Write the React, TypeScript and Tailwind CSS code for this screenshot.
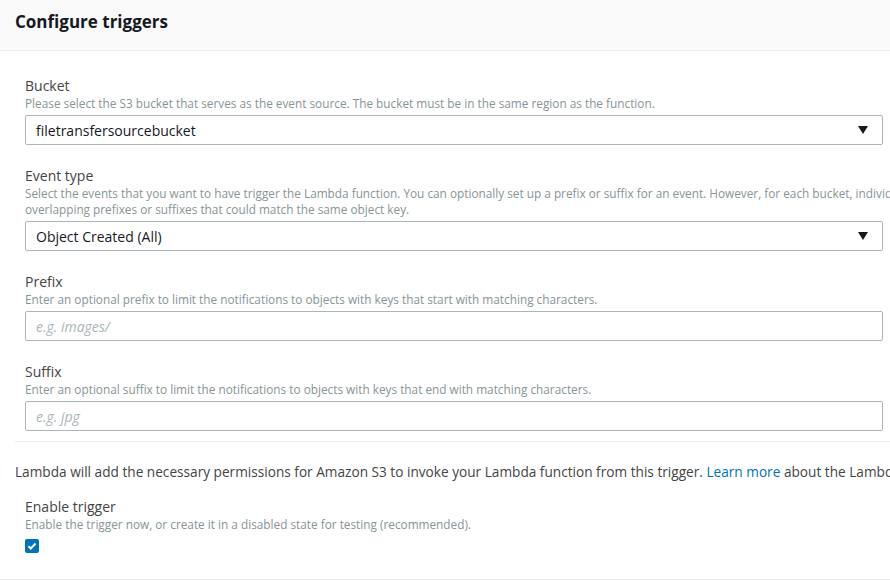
const font = { fontFamily: '"Open Sans", "Noto Sans", Arial, sans-serif' };

function Caret() {
  return (
    <svg width="10" height="8" viewBox="0 0 10 8" className="shrink-0">
      <path d="M0 0h10L5 8z" fill="#16191f" />
    </svg>
  );
}

function Field({
  label,
  desc,
  children,
}: {
  label: string;
  desc: React.ReactNode;
  children: React.ReactNode;
}) {
  return (
    <div className="pl-[10px]">
      <div className="text-[14px] leading-[18px] text-[#444]">{label}</div>
      <div className="text-[11.8px] leading-[16px] text-[#879596] whitespace-nowrap">{desc}</div>
      <div className="mt-[4px]">{children}</div>
    </div>
  );
}

function SelectBox({ value }: { value: string }) {
  return (
    <div className="w-[858px] h-[30px] border border-[#aab7b8] rounded-[2px] bg-white flex items-center justify-between pl-[10px] pr-[14px]">
      <span className="text-[14px] text-[#16191f]">{value}</span>
      <Caret />
    </div>
  );
}

function TextBox({ placeholder }: { placeholder: string }) {
  return (
    <div className="w-[858px] h-[30px] border border-[#aab7b8] rounded-[2px] bg-white flex items-center pl-[10px]">
      <span className="text-[14px] italic text-[#aab7b8]">{placeholder}</span>
    </div>
  );
}

export default function App() {
  return (
    <div className="w-[890px] h-[581px] bg-white overflow-hidden" style={font}>
      <div className="h-[51px] bg-[#fafafa] border-b border-[#eaeded] flex items-start pt-[10px] px-[15px]">
        <h2 className="text-[17px] leading-[24px] font-bold text-[#16191f]">Configure triggers</h2>
      </div>

      <div className="pl-[15px]">
        <div className="pt-[26px] flex flex-col gap-[22px]">
          <Field label="Bucket" desc="Please select the S3 bucket that serves as the event source. The bucket must be in the same region as the function.">
            <SelectBox value="filetransfersourcebucket" />
          </Field>
          <Field
            label="Event type"
            desc={
              <>
                <div>
                  Select the events that you want to have trigger the Lambda function. You can optionally set up a prefix or suffix for an event. However, for each bucket, individual events cannot have multiple configurations with
                </div>
                <div>overlapping prefixes or suffixes that could match the same object key.</div>
              </>
            }
          >
            <SelectBox value="Object Created (All)" />
          </Field>
          <Field label="Prefix" desc="Enter an optional prefix to limit the notifications to objects with keys that start with matching characters.">
            <TextBox placeholder="e.g. images/" />
          </Field>
          <Field label="Suffix" desc="Enter an optional suffix to limit the notifications to objects with keys that end with matching characters.">
            <TextBox placeholder="e.g. jpg" />
          </Field>
        </div>

        <div className="mt-[10px] border-t border-[#eaeded] pt-[20px]">
          <p className="text-[13.65px] leading-[20px] text-[#444] whitespace-nowrap">
            Lambda will add the necessary permissions for Amazon S3 to invoke your Lambda function from this trigger.{" "}
            <a className="text-[#0073bb]">Learn more</a> about the Lambda permissions model.
          </p>
        </div>

        <div className="mt-[16px] pl-[10px] pb-[26px]">
          <div className="text-[14px] leading-[18px] text-[#444]">Enable trigger</div>
          <div className="text-[11.8px] leading-[16px] text-[#879596]">
            Enable the trigger now, or create it in a disabled state for testing (recommended).
          </div>
          <div className="mt-[7px] w-[14px] h-[14px] rounded-[2px] bg-[#0073bb] flex items-center justify-center">
            <svg width="10" height="10" viewBox="0 0 10 10">
              <path d="M1.5 5.2l2.3 2.3L8.5 2.5" fill="none" stroke="#fff" strokeWidth="2" />
            </svg>
          </div>
        </div>
      </div>
      <div className="border-t border-[#eaeded]" />
    </div>
  );
}
